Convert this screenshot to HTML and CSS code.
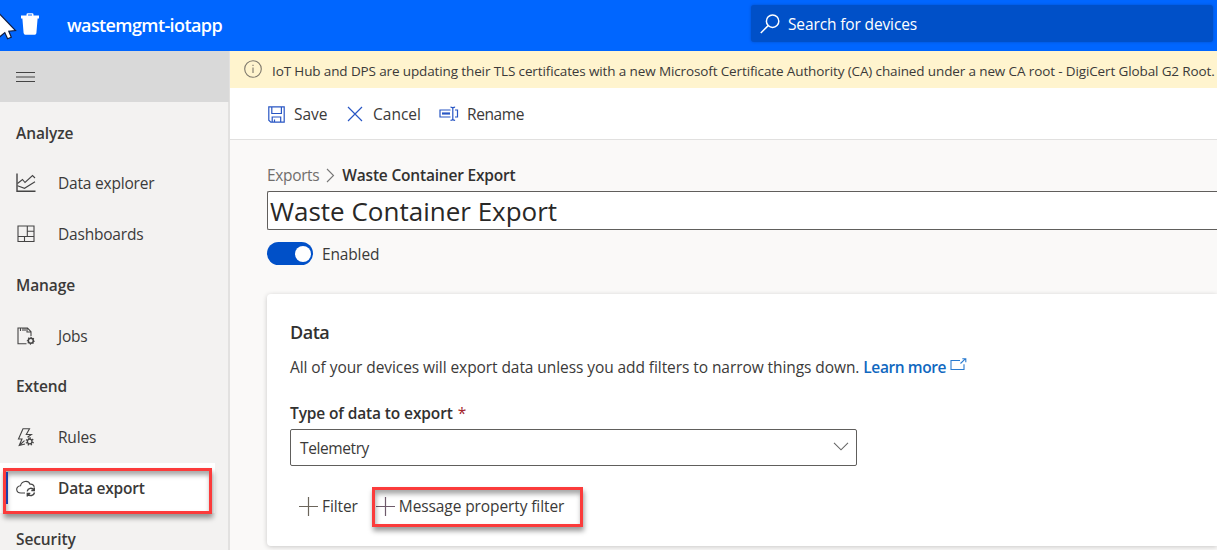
FILE: index.html
```html
<!DOCTYPE html>
<html lang="en">
<head>
<meta charset="utf-8">
<title>wastemgmt-iotapp</title>
<link rel="stylesheet" href="styles.css">
</head>
<body>
<header class="topbar">
  <svg class="trash" width="18" height="22" viewBox="0 0 18 22"><path fill="#fff" d="M0 2.500h5.500V1.600Q5.500.3 6.800.3h4.400q1.300 0 1.300 1.300v.9H18v3H16.600l-1.200 14.600q-.1 1.600-1.700 1.600H4.300q-1.500 0-1.700-1.600L1.400 5.500H0zM7 1.600v.9h4v-.9z"/></svg>
  <span class="app-name"><span class="t">wastemgmt-iotapp</span></span>
  <div class="search">
    <svg width="20" height="20" viewBox="0 0 20 20" fill="none" stroke="#fff" stroke-width="1.500"><circle cx="12.600" cy="7.200" r="6.200"/><path d="M8.200 11.600.8 19"/></svg>
    <span class="t search-text">Search for devices</span>
  </div>
  <svg class="cursor" width="18" height="42" viewBox="0 0 18 42"><path fill="#fff" stroke="#101c40" stroke-width="1.200" d="M-6 8 15.500 30.500 8.800 31.200 11.300 37.200 7.600 38.800 4.800 32.600-1 37.500z"/></svg>
</header>
<div class="body">
  <nav class="sidebar">
    <div class="menu">
      <svg width="19" height="12" viewBox="0 0 19 12" stroke="#444" stroke-width="1.200"><path d="M0 1.500h19M0 6h19M0 10.500h19"/></svg>
    </div>
    <ul class="nav">
      <li class="group"><span class="t">Analyze</span></li>
      <li class="item"><svg viewBox="0 0 20 20"><path stroke-width="1.400" d="M1 .5V18.300H19.500"/><path d="M1.500 10.500 6.500 6.500 9 9.500 16.500 2.500 19 5M1.500 12.800 8.500 15.300 19 8.700"/></svg><span class="t">Data explorer</span></li>
      <li class="item"><svg viewBox="0 0 20 20"><path d="M2 2h16v15.500H2zM11.300 2v10.500M2 12.500h16M11.300 7.200H18M8.500 12.500v5"/></svg><span class="t">Dashboards</span></li>
      <li class="group"><span class="t">Manage</span></li>
      <li class="item"><svg viewBox="0 0 20 20"><path d="M10.500 17.800H2V2h9.500l3.500 3.700V10M11 2v4h4M4.500 2v3M7 2v3M9 2v3"/><circle cx="14.800" cy="14.700" r="2.500" stroke-width="1.500"/><path stroke-dasharray="1 1.500" d="M14.800 11.300a3.400 3.400 0 1 1-.01 0"/></svg><span class="t">Jobs</span></li>
      <li class="group"><span class="t">Extend</span></li>
      <li class="item"><svg viewBox="0 0 20 20"><path d="M9 17 3.200 18.500 6 12H2.500L7 1.800h6.500L10.300 7.500h5L11.500 10.200M3.200 18.500 8.500 13.700"/><circle cx="13.700" cy="14.500" r="2.300" stroke-width="1.300"/><path stroke-width="1.600" stroke-dasharray="1.200 1.500" d="M13.700 11.100a3.400 3.400 0 1 1-.01 0"/></svg><span class="t">Rules</span></li>
      <li class="item active"><svg viewBox="0 0 20 20"><path d="M9 15H5C-.5 15-.8 8 4.500 7.800 5.500 2.500 12.500 2 14 6.200 16.300 6 18 7.500 18.200 9.300"/><path stroke-width="1.400" d="M11.200 13.300C12 10 16 9.300 18 12M18.300 9.500V12.500H15.300M18.500 14.500C17.800 18 13.700 18.500 11.700 16M11.300 18.500v-3h3"/></svg><span class="t">Data export</span></li>
      <li class="group"><span class="t">Security</span></li>
    </ul>
    <div class="mark mark-nav"></div>
  </nav>
  <main class="main">
    <div class="banner">
      <svg width="18" height="18" viewBox="0 0 18 18" fill="none" stroke="#7d776b" stroke-width="1.100"><circle cx="9" cy="9" r="8.300"/><path d="M9 7.500v5.500M9 4.700v1.400"/></svg>
      <span class="t banner-text">IoT Hub and DPS are updating their TLS certificates with a new Microsoft Certificate Authority (CA) chained under a new CA root - DigiCert Global G2 Root.</span>
    </div>
    <div class="commands">
      <span class="cmd cmd-save"><svg width="17" height="17" viewBox="0 0 17 17" fill="none" stroke="#2856c4" stroke-width="1.200"><path d="M.8.800h15.400v15.400H2.800l-2-2zM3.800.800v6.700h9.600V.8M4.200 16v-5h8.500v5M6.500 16v-2.500"/></svg><span class="t">Save</span></span>
      <span class="cmd cmd-cancel"><svg width="16" height="16" viewBox="0 0 16 16" fill="none" stroke="#2856c4" stroke-width="1.200"><path d="m1 1 14 14M15 1 1 15"/></svg><span class="t">Cancel</span></span>
      <span class="cmd cmd-rename"><svg width="20" height="16" viewBox="0 0 20 16" fill="none" stroke="#2856c4" stroke-width="1.200"><path d="M11.500 4H1v7h10.500M16 4h2.500v7H16M11.500 1.200q2.300 0 2.300 1.300v10.500q0 1.300-2.300 1.300M16.100 1.200q-2.300 0-2.300 1.300v10.500q0 1.300 2.300 1.300"/><path stroke-width="2.200" d="M3 7.500h8"/></svg><span class="t">Rename</span></span>
    </div>
    <div class="content">
      <div class="crumbs">
        <span class="t crumb">Exports</span>
        <svg width="9" height="15" viewBox="0 0 9 15" fill="none" stroke="#777" stroke-width="1.100"><path d="m1 1 6.500 6.500L1 14"/></svg>
        <span class="t crumb-now">Waste Container Export</span>
      </div>
      <div class="name-input"><span class="t">Waste Container Export</span></div>
      <div class="toggle-row"><span class="toggle"><span class="knob"></span></span><span class="t">Enabled</span></div>
      <section class="card">
        <h2 class="card-title"><span class="t">Data</span></h2>
        <p class="desc"><span class="t desc-text">All of your devices will export data unless you add filters to narrow things down.</span><a class="t learn">Learn more</a><svg width="17" height="13" viewBox="0 0 17 13" fill="none" stroke="#2a7bd0" stroke-width="1.100"><path d="M10 2.500H1v9h13V6.300M10.500 5.500 15.300.9M12.300.8h3.500v3.400"/></svg></p>
        <div class="label"><span class="t label-text">Type of data to export</span><span class="req">*</span></div>
        <div class="select"><span class="t select-text">Telemetry</span><svg width="16" height="9" viewBox="0 0 16 9" fill="none" stroke="#666" stroke-width="1.100"><path d="m1 .8 7 7 7-7"/></svg></div>
        <div class="adders">
          <span class="add"><svg width="19" height="19" viewBox="0 0 19 19" stroke="#6b655b" stroke-width="1.200"><path d="M9.500 0v19M0 9.500h19"/></svg><span class="t">Filter</span></span>
          <span class="add"><svg width="19" height="19" viewBox="0 0 19 19" stroke="#6e5a6b" stroke-width="1.200"><path d="M9.500 0v19M0 9.500h19"/></svg><span class="t">Message property filter</span><span class="mark mark-filter"></span></span>
        </div>
      </section>
    </div>
  </main>
</div>
</body>
</html>
```
FILE: styles.css
```css
* { box-sizing: border-box; }
body {
  margin: 0; width: 1217px; height: 550px; overflow: hidden;
  display: flex; flex-direction: column;
  font-family: "Open Sans", "Noto Sans", sans-serif; font-size: 15.5px; line-height: 20px;
  color: #3b3a39; background: #faf9f8;
}
svg { display: block; flex: none; overflow: visible; }
.t { white-space: nowrap; }
.topbar { position: relative; height: 51px; flex: none; display: flex; align-items: flex-start; background: #0066ff; color: #fff; }
.trash { margin: 13px 0 0 21px; }
.app-name { margin: 15px 0 0 28px; font-size: 18px; font-weight: 600; letter-spacing: -0.6px; }
.search { margin: 5px 4px 0 auto; width: 462px; height: 37px; border-radius: 3px; background: #0050c8; display: flex; align-items: center; padding-left: 9px; gap: 8px; box-shadow: 0 0 3px #0050c8; }
.search-text { letter-spacing: -0.13px; }
.cursor { position: absolute; left: 0; top: 0; overflow: hidden; }
.body { flex: 1; display: flex; min-height: 0; }
.sidebar { position: relative; width: 230px; flex: none; background: #f3f2f1; border-right: 2px solid #e2e1e0; }
.menu { height: 51px; width: 229px; background: #d9d9d9; padding: 20px 0 0 16px; }
.nav { list-style: none; margin: 0; padding: 5.300px 0 0; }
.nav li { height: 50.75px; display: flex; align-items: center; letter-spacing: -0.2px; }
.group { padding-left: 16px; font-weight: 600; }
.nav .group { letter-spacing: -0.1px; }
.item { padding-left: 16px; gap: 22px; width: 215px; }
.item svg { width: 20px; height: 20px; fill: none; stroke: #444; stroke-width: 1.100; }
.item.active { background: #fff; font-weight: 600; }
.mark { position: absolute; border: 3px solid #fb3b3b; box-shadow: 1px 4px 5px rgba(0,0,0,.4), inset 1px 4px 5px rgba(0,0,0,.35); }
.mark-nav { left: 3px; top: 417px; width: 209px; height: 46px; }
.mark-nav::before { content: ""; position: absolute; left: 0; top: 1px; width: 1.500px; height: 32px; background: #1a3fa8; }
.main { flex: 1; min-width: 0; display: flex; flex-direction: column; }
.banner { height: 37px; flex: none; background: #fff4ce; display: flex; align-items: center; padding-left: 14px; gap: 10px; font-size: 13.500px; padding-top: 2px; }
.banner svg { margin-top: -4px; }
.banner-text { letter-spacing: -0.125px; }
.commands { height: 52px; flex: none; background: #fff; border-bottom: 1px solid #e1e0df; display: flex; align-items: center; padding: 1px 0 0 38px; }
.cmd { display: flex; align-items: center; gap: 9px; }
.cmd-save { width: 79px; }
.cmd-cancel { width: 92px; gap: 10px; }
.cmd-rename { gap: 8px; letter-spacing: -0.4px; }
.content { padding: 25px 0 0 37px; }
.crumbs { display: flex; align-items: center; gap: 7px; height: 20px; }
.crumb { color: #706e6c; letter-spacing: -0.35px; }
.crumb-now { font-weight: 600; color: #323130; letter-spacing: -0.2px; }
.name-input { margin-top: 6px; height: 39px; border: 1px solid #605e5c; border-right: 0; border-radius: 2px 0 0 2px; background: #fff; display: flex; align-items: center; padding: 1px 0 0 2px; font-size: 26px; color: #292827; }
.toggle-row { display: flex; align-items: center; gap: 9px; height: 23px; margin-top: 12px; letter-spacing: -0.15px; }
.toggle { width: 46px; height: 23px; border-radius: 12px; background: #0050c8; display: flex; align-items: center; justify-content: flex-end; padding-right: 2px; }
.knob { width: 16px; height: 16px; border-radius: 50%; background: #fff; }
.card { margin-top: 29px; height: 252px; background: #fff; border-radius: 4px 0 0 4px; box-shadow: 0 1px 5px rgba(0,0,0,.2); padding: 28px 0 0 23px; }
.card-title { margin: 0; font-size: 18px; line-height: 20px; font-weight: 600; color: #323130; letter-spacing: -0.5px; }
.desc { margin: 15px 0 0; display: flex; height: 20px; }
.desc-text { letter-spacing: -0.075px; }
.learn { margin-left: 4px; color: #1068bf; font-weight: 600; letter-spacing: -0.4px; }
.desc svg { margin: 1px 0 0 4px; }
.label { margin-top: 26px; display: flex; gap: 5px; font-weight: 600; color: #323130; letter-spacing: -0.13px; }
.req { color: #a4262c; font-weight: 400; }
.select { margin-top: 6px; width: 567px; height: 37px; border: 1px solid #605e5c; border-radius: 2px; display: flex; align-items: center; justify-content: space-between; padding: 0 7px 0 9px; }
.select-text { letter-spacing: -0.4px; }
.select svg { margin-top: -3px; }
.adders { display: flex; gap: 18px; margin-top: 30px; padding-left: 9px; height: 20px; letter-spacing: -0.1px; }
.add { position: relative; display: flex; align-items: center; gap: 4px; }
.mark-filter { left: -4px; top: -9px; width: 211px; height: 40px; }
```
